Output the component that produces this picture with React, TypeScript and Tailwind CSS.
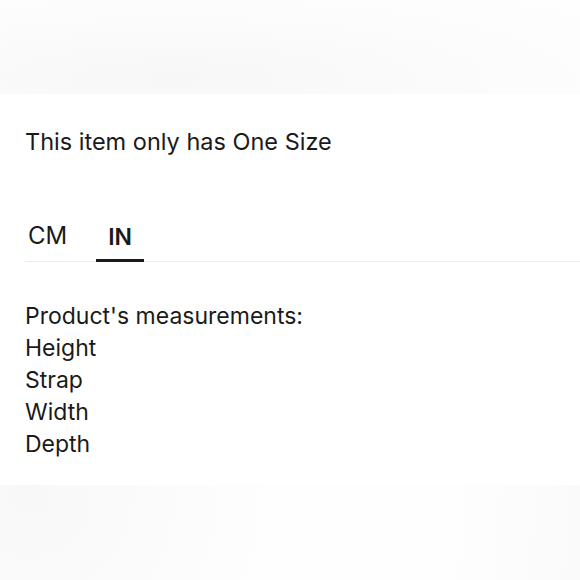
export default function App() {
  const rows = ["Height", "Strap", "Width", "Depth"];
  return (
    <div className="flex h-[580px] w-[580px] flex-col overflow-hidden bg-white font-['Inter',sans-serif] text-[#1a1a1a]">
      <div className="h-[94px] shrink-0 bg-[radial-gradient(ellipse_at_30%_85%,#f7f7f7,#fcfcfc_60%,#fefefe)]" />
      <div className="flex flex-1 flex-col pl-[25px]">
        <p className="mt-[32px] text-[23.5px] leading-[32px]">This item only has One Size</p>
        <div className="mt-[60px] flex border-b border-[#ececec]">
          <button className="px-[3px] pb-[10px] pt-[3px] text-[24px] leading-[30px]">CM</button>
          <button className="-mb-px ml-[26px] border-b-[3px] border-[#1a1a1a] px-[12px] pb-[7px] pt-[3px] text-[23px] font-semibold leading-[30px]">
            IN
          </button>
        </div>
        <div className="mt-[38px] flex flex-col text-[23px] leading-[32px]">
          <span>Product's measurements:</span>
          {rows.map((r) => (
            <span key={r}>{r}</span>
          ))}
        </div>
      </div>
      <div className="h-[95px] shrink-0 bg-[radial-gradient(circle_at_5%_10%,#f8f8f8,#fcfcfc_30%,#fefefe_45%,#fefefe_75%,#fafafa)]" />
    </div>
  );
}
